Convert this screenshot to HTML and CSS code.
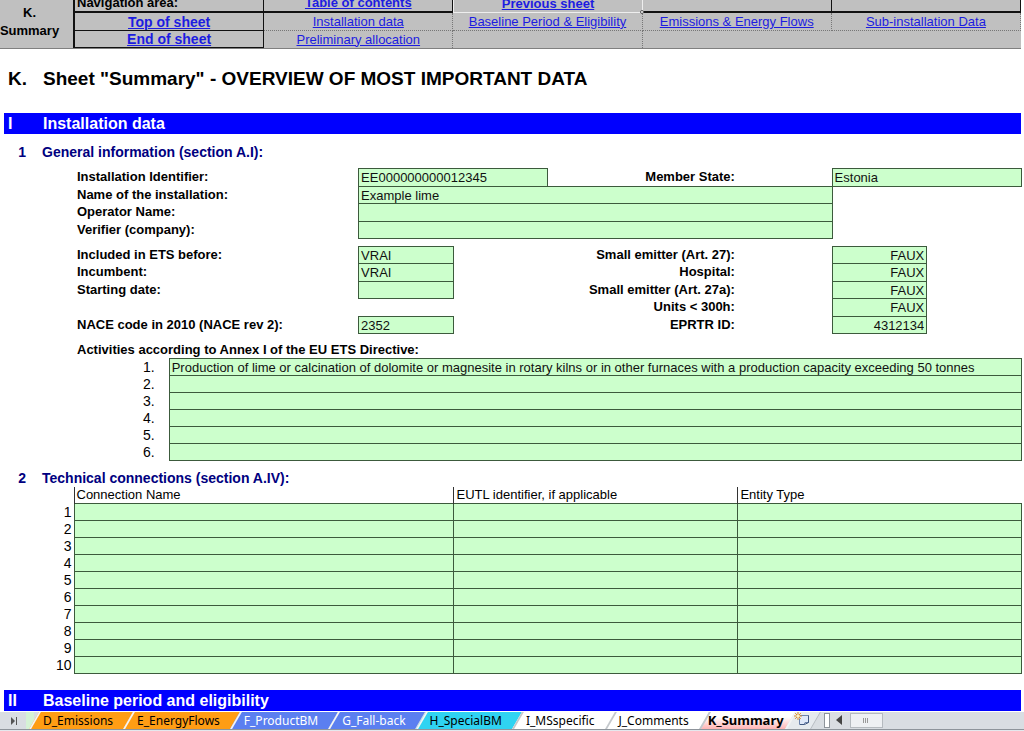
FILE: index.html
```
<!DOCTYPE html>
<html lang="en">
<head>
  <meta charset="UTF-8" />
  <meta name="viewport" content="width=device-width, initial-scale=1" />
  <title>K_Summary</title>
  <link rel="stylesheet" href="styles.css">
</head>
<body>

  <header class="top">
    <div class="sheet-name">K.<br>Summary</div>
    <nav class="nav-grid">
      <div class="nav-cell first solid title">Navigation area:</div>
      <div class="nav-cell first solid"><a href="#toc">Table of contents</a></div>
      <div class="nav-cell first active"><a href="#prev">Previous sheet</a><span class="handle"></span></div>
      <div class="nav-cell first solid"></div>
      <div class="nav-cell first solid"></div>

      <div class="nav-cell solid strong"><a href="#top">Top of sheet</a></div>
      <div class="nav-cell"><a href="#section-1">Installation data</a></div>
      <div class="nav-cell"><a href="#section-2">Baseline Period &amp; Eligibility</a></div>
      <div class="nav-cell"><a href="#emissions">Emissions &amp; Energy Flows</a></div>
      <div class="nav-cell"><a href="#sub">Sub-installation Data</a></div>

      <div class="nav-cell solid strong"><a href="#end">End of sheet</a></div>
      <div class="nav-cell last"><a href="#allocation">Preliminary allocation</a></div>
      <div class="nav-cell last"></div>
      <div class="nav-cell last plain"></div>
      <div class="nav-cell last plain"></div>
    </nav>
  </header>

  <main class="sheet">
    <h1><span class="num">K.</span>Sheet "Summary" - OVERVIEW OF MOST IMPORTANT DATA</h1>

    <h2 class="bar" id="section-1"><span class="num">I</span>Installation data</h2>

    <h3><span class="num">1</span>General information (section A.I):</h3>

    <form class="info">
      <label class="r1" for="ident">Installation Identifier:</label>
      <input class="r1 mid-2" id="ident" type="text" value="EE000000000012345">
      <label class="r1 right" for="state">Member State:</label>
      <input class="r1 end-2" id="state" type="text" value="Estonia">

      <label class="r2" for="instName">Name of the installation:</label>
      <input class="r2 wide" id="instName" type="text" value="Example lime">
      <label class="r3" for="operator">Operator Name:</label>
      <input class="r3 wide" id="operator" type="text">
      <label class="r4" for="verifier">Verifier (company):</label>
      <input class="r4 wide" id="verifier" type="text">

      <label class="r6" for="ets">Included in ETS before:</label>
      <input class="r6 mid-1" id="ets" type="text" value="VRAI">
      <label class="r6 right" for="art27">Small emitter (Art. 27):</label>
      <input class="r6 end-1" id="art27" type="text" value="FAUX">

      <label class="r7" for="incumbent">Incumbent:</label>
      <input class="r7 mid-1" id="incumbent" type="text" value="VRAI">
      <label class="r7 right" for="hospital">Hospital:</label>
      <input class="r7 end-1" id="hospital" type="text" value="FAUX">

      <label class="r8" for="start">Starting date:</label>
      <input class="r8 mid-1" id="start" type="text">
      <label class="r8 right" for="art27a">Small emitter (Art. 27a):</label>
      <input class="r8 end-1" id="art27a" type="text" value="FAUX">

      <label class="r9 right" for="units">Units &lt; 300h:</label>
      <input class="r9 end-1" id="units" type="text" value="FAUX">

      <label class="r10" for="nace">NACE code in 2010 (NACE rev 2):</label>
      <input class="r10 mid-1" id="nace" type="text" value="2352">
      <label class="r10 right" for="eprtr">EPRTR ID:</label>
      <input class="r10 end-1" id="eprtr" type="text" value="4312134">
    </form>

    <h4>Activities according to Annex I of the EU ETS Directive:</h4>
    <div class="activities">
      <label for="act1">1.</label>
      <input id="act1" type="text" value="Production of lime or calcination of dolomite or magnesite in rotary kilns or in other furnaces with a production capacity exceeding 50 tonnes">
      <label for="act2">2.</label>
      <input id="act2" type="text">
      <label for="act3">3.</label>
      <input id="act3" type="text">
      <label for="act4">4.</label>
      <input id="act4" type="text">
      <label for="act5">5.</label>
      <input id="act5" type="text">
      <label for="act6">6.</label>
      <input id="act6" type="text">
    </div>

    <h3 class="second"><span class="num">2</span>Technical connections (section A.IV):</h3>
    <table class="connections">
      <colgroup><col class="c-num"><col class="c-name"><col class="c-eutl"><col></colgroup>
      <thead>
        <tr><td></td><th scope="col">Connection Name</th><th scope="col">EUTL identifier, if applicable</th><th scope="col">Entity Type</th></tr>
      </thead>
      <tbody>
        <tr><th scope="row">1</th><td></td><td></td><td></td></tr>
        <tr><th scope="row">2</th><td></td><td></td><td></td></tr>
        <tr><th scope="row">3</th><td></td><td></td><td></td></tr>
        <tr><th scope="row">4</th><td></td><td></td><td></td></tr>
        <tr><th scope="row">5</th><td></td><td></td><td></td></tr>
        <tr><th scope="row">6</th><td></td><td></td><td></td></tr>
        <tr><th scope="row">7</th><td></td><td></td><td></td></tr>
        <tr><th scope="row">8</th><td></td><td></td><td></td></tr>
        <tr><th scope="row">9</th><td></td><td></td><td></td></tr>
        <tr><th scope="row">10</th><td></td><td></td><td></td></tr>
      </tbody>
    </table>

    <h2 class="bar" id="section-2"><span class="num">II</span>Baseline period and eligibility</h2>
  </main>

  <footer class="tabs">
    <button class="last-sheet" type="button" aria-label="Last sheet">
      <svg width="8" height="8" viewBox="0 0 8 8"><path d="M1 0l4 4-4 4z" fill="#555"/><path d="M6 0h1v8H6z" fill="#555"/></svg>
    </button>
    <span class="tab-stub"></span>
    <button class="tab orange" type="button">D_Emissions</button>
    <button class="tab orange" type="button">E_EnergyFlows</button>
    <button class="tab blue" type="button">F_ProductBM</button>
    <button class="tab blue" type="button">G_Fall-back</button>
    <button class="tab cyan" type="button">H_SpecialBM</button>
    <button class="tab white" type="button">I_MSspecific</button>
    <button class="tab white" type="button">J_Comments</button>
    <button class="tab current" type="button">K_Summary</button>
    <button class="tab new" type="button" aria-label="Insert sheet">
      <svg width="16" height="14" viewBox="0 0 16 14">
        <path d="M6 3.500h8.500v7H11l-1 2H5.500v-6" fill="#dfe8f8" stroke="#6d84ad"/>
        <path d="M6 12.500h4.500l4-2v-7" fill="none" stroke="#3f5680"/>
        <path d="M4 0v8M0 4h8M1.200 1.200l5.600 5.600M6.800 1.200L1.200 6.800" stroke="#d98a2b"/>
        <circle cx="4" cy="4" r="1.500" fill="#fff3c4"/>
      </svg>
    </button>
    <div class="scroll">
      <span class="split"></span>
      <button class="arrow" type="button" aria-label="Scroll left">
        <svg width="6" height="10" viewBox="0 0 6 10"><path d="M6 0v10L0 5z" fill="#444"/></svg>
      </button>
      <span class="thumb"><svg width="6" height="5" viewBox="0 0 6 5"><path d="M.5 0v5M2.500 0v5M4.500 0v5" stroke="#999"/></svg></span>
    </div>
  </footer>

</body>
</html>
```
FILE: styles.css
```
* {
  box-sizing: border-box;
}
body {
  margin: 0;
  min-height: 100vh;
  display: flex;
  flex-direction: column;
  background: #fff;
  color: #000;
  font-family: "Liberation Sans", Arial, sans-serif;
  font-size: 13px;
  line-height: 16px;
}
h1, h2, h3, h4 {
  margin: 0;
}

/* navigation area */
.top {
  display: flex;
  margin-right: 3px;
  background: #c0c0c0;
  border-bottom: 1px solid #808080;
}
.sheet-name {
  width: 75px;
  padding: 4px 14px 8px 0;
  border-right: 2px solid #111;
  font-weight: bold;
  line-height: 18px;
  display: flex;
  align-items: center;
  justify-content: center;
  text-align: center;
}
.nav-grid {
  flex: 1;
  display: grid;
  grid-template-columns: repeat(5, 1fr);
  grid-template-rows: 13px 18px 17px;
}
.nav-cell {
  display: flex;
  align-items: center;
  justify-content: center;
  border-right: 1px dotted #777;
  border-bottom: 1px dotted #777;
  white-space: nowrap;
}
.nav-cell.first {
  align-items: flex-end;
  height: 13px;
  font-weight: bold;
}
.nav-cell.title {
  justify-content: flex-start;
  padding-left: 2px;
}
.nav-cell.solid {
  border-right: 1px solid #111;
  border-bottom: 2px solid #111;
}
.nav-cell.strong {
  font-size: 14px;
  font-weight: bold;
  border-bottom-width: 1px;
}
.nav-cell.last {
  border-bottom: none;
}
.nav-cell.plain {
  border-right: none;
}
.nav-cell.active {
  position: relative;
  border: 1px solid #eee;
  border-top: none;
}
.handle {
  position: absolute;
  right: -2px;
  bottom: -2px;
  width: 4px;
  height: 4px;
  border: 1px solid #555;
  border-radius: 50%;
  background: #fff;
}
.nav-cell a {
  color: #1c1ce0;
}

/* sheet body */
.sheet {
  padding: 0 3px 1px 0;
}
.num {
  display: inline-block;
}
h1 {
  padding: 18px 0 22px 8px;
  font-size: 19px;
  line-height: 24px;
}
h1 .num {
  width: 35px;
}
.bar {
  margin-left: 4px;
  padding-left: 4px;
  background: #0000ff;
  color: #fff;
  font-size: 16px;
  line-height: 21px;
}
.bar .num {
  width: 35px;
}
h3 {
  padding: 9px 0 7px;
  color: #000080;
  font-size: 14px;
  line-height: 18px;
}
h3 .num {
  width: 42px;
  padding-right: 16px;
  text-align: right;
}
h3.second {
  padding: 9px 0 0;
}
h4 {
  padding: 9px 0 0 77px;
  font-size: 13px;
  line-height: 16px;
}
input {
  width: calc(100% + 1px);
  min-width: 0;
  height: calc(100% + 1px);
  margin: 0;
  padding: 0 2px;
  border: 1px solid #3c5a3c;
  border-radius: 0;
  background: #ccffcc;
  color: #111;
  font: inherit;
}

/* ten equal columns, shared with the navigation area */
.info {
  display: grid;
  grid-template-columns: repeat(10, 1fr);
  grid-template-rows: 18px 17px 18px 17px 8px 17px 18px 17px 18px 17px;
  margin-left: 74px;
}
.info label {
  grid-column: 1 / 4;
  padding-left: 3px;
  font-weight: bold;
  line-height: 18px;
  white-space: nowrap;
}
.info label.right {
  grid-column: 5 / 8;
  padding-right: 2px;
  text-align: right;
}
.info .mid-1 { grid-column: 4 / 5; }
.info .mid-2 { grid-column: 4 / 6; }
.info .wide { grid-column: 4 / 9; }
.info .end-1 { grid-column: 9 / 10; text-align: right; }
.info .end-2 { grid-column: 9 / 11; }
.r1 { grid-row: 1; }
.r2 { grid-row: 2; }
.r3 { grid-row: 3; }
.r4 { grid-row: 4; }
.r6 { grid-row: 6; }
.r7 { grid-row: 7; }
.r8 { grid-row: 8; }
.r9 { grid-row: 9; }
.r10 { grid-row: 10; }

.activities {
  display: grid;
  grid-template-columns: 1fr 9fr;
  grid-auto-rows: 17px;
  margin-left: 74px;
}
.activities label {
  padding-right: 14px;
  font-size: 14px;
  line-height: 18px;
  text-align: right;
}

.connections {
  width: calc(100% + 1px);
  table-layout: fixed;
  border-collapse: collapse;
  margin-bottom: 16px;
}
.c-num { width: 74px; }
.c-name { width: 37.2%; }
.c-eutl { width: 27.8%; }
.connections th, .connections td {
  height: 17px;
  padding: 0 2px;
  font-weight: normal;
  line-height: 16px;
  text-align: left;
}
.connections thead th, .connections thead td {
  height: 16px;
}
.connections thead th {
  border-left: 1px solid #333;
}
.connections tbody th {
  font-size: 14px;
  text-align: right;
}
.connections tbody td {
  border: 1px solid #3c5a3c;
  background: #ccffcc;
}

/* sheet tabs */
.tabs {
  display: flex;
  flex: 1;
  align-items: flex-start;
  height: 20px;
  background: linear-gradient(#d9dde2 17px, #8e949b 17px, #8e949b 18px, #e4e8ed 18px);
  font-family: "Noto Sans", sans-serif;
}
.tabs button {
  border: none;
  background: none;
  font: inherit;
  font-size: 12px;
  line-height: 17px;
  height: 17px;
}
.last-sheet {
  width: 26px;
  padding: 0 0 0 2px;
}
.tab-stub {
  width: 8px;
  height: 17px;
  background: #d5f2d5;
}
.tab {
  position: relative;
  z-index: 0;
  padding: 0 15px 0 9px;
  white-space: nowrap;
}
.tab::before {
  content: "";
  position: absolute;
  z-index: -1;
  inset: 0;
  border-left: 2px solid #f4f4f4;
  transform: skewX(-30deg);
}
.orange::before { background: #ff9d14; }
.blue::before { background: #5b7ff0; }
.cyan::before { background: #2fd3f2; }
.white::before { background: #fff; border-left-color: #c4c8cc; }
.current::before { background: linear-gradient(#fff 30%, #ffb3b3); border-left-color: #c4c8cc; }
.new::before { background: #e6eaee; border-right: 1px solid #b5babf; }
.tabs .blue {
  color: #fff;
}
.tabs .current {
  padding: 0 6px 0 4px;
  font-size: 13px;
  font-weight: bold;
}
.tabs .new {
  padding: 0 6px 0 4px;
}
.scroll {
  flex: 1;
  display: flex;
  align-items: center;
  height: 17px;
  margin-left: 8px;
}
.split {
  width: 6px;
  height: 15px;
  border: 1px solid #8e949b;
  background: #fff;
}
.tabs .arrow {
  padding: 0 8px 0 6px;
}
.thumb {
  display: flex;
  align-items: center;
  justify-content: center;
  width: 33px;
  height: 15px;
  border: 1px solid #b5babf;
  background: #eef0f3;
}
```
